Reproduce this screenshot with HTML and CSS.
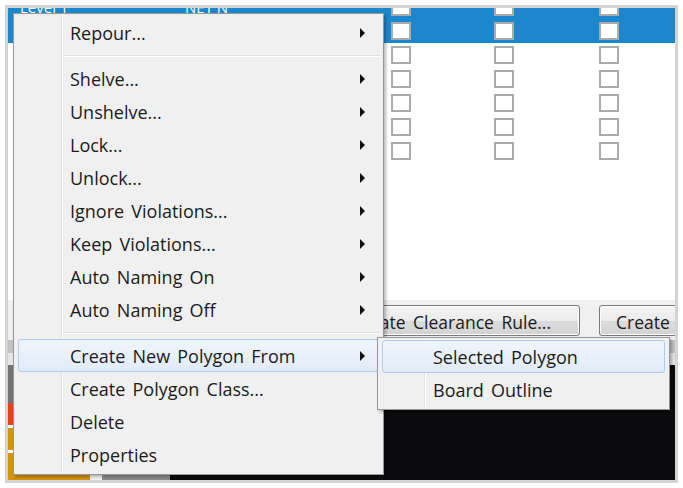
FILE: index.html
```html
<!DOCTYPE html>
<html>
<head>
<meta charset="utf-8">
<link rel="stylesheet" href="styles.css">
</head>
<body>
<div class="screen">
  <div class="frame">
    <div class="grid">
      <div class="row sel"><span class="txt">Level 1</span><span class="txt">NET N</span><span class="chk"></span><span class="chk"></span><span class="chk"></span></div>
      <div class="row sel"><span class="txt"></span><span class="txt"></span><span class="chk"></span><span class="chk"></span><span class="chk"></span></div>
      <div class="row"><span class="txt"></span><span class="txt"></span><span class="chk"></span><span class="chk"></span><span class="chk"></span></div>
      <div class="row"><span class="txt"></span><span class="txt"></span><span class="chk"></span><span class="chk"></span><span class="chk"></span></div>
      <div class="row"><span class="txt"></span><span class="txt"></span><span class="chk"></span><span class="chk"></span><span class="chk"></span></div>
      <div class="row"><span class="txt"></span><span class="txt"></span><span class="chk"></span><span class="chk"></span><span class="chk"></span></div>
      <div class="row"><span class="txt"></span><span class="txt"></span><span class="chk"></span><span class="chk"></span><span class="chk"></span></div>
    </div>
    <div class="btnbar">
      <button class="btn btn-rule">Create Clearance Rule...</button>
      <button class="btn btn-create">Create Net Rule...</button>
    </div>
    <div class="strip-dark"></div>
    <div class="strip-light"></div>
    <div class="bottom">
      <div class="layers">
        <div class="layer l-gray"></div>
        <div class="layer l-red"></div>
        <div class="layer l-gold"></div>
        <div class="layer l-gold last"><span class="sw"></span><span class="gap"></span><span class="rest"></span></div>
      </div>
      <div class="canvas"></div>
    </div>
  </div>

  <div class="menu">
    <div class="item"><span class="label">Repour...</span><span class="arrow"></span></div>
    <div class="sep"></div>
    <div class="item"><span class="label">Shelve...</span><span class="arrow"></span></div>
    <div class="item"><span class="label">Unshelve...</span><span class="arrow"></span></div>
    <div class="item"><span class="label">Lock...</span><span class="arrow"></span></div>
    <div class="item"><span class="label">Unlock...</span><span class="arrow"></span></div>
    <div class="item"><span class="label">Ignore Violations...</span><span class="arrow"></span></div>
    <div class="item"><span class="label">Keep Violations...</span><span class="arrow"></span></div>
    <div class="item"><span class="label">Auto Naming On</span><span class="arrow"></span></div>
    <div class="item"><span class="label">Auto Naming Off</span><span class="arrow"></span></div>
    <div class="sep"></div>
    <div class="item hot"><span class="label">Create New Polygon From</span><span class="arrow"></span></div>
    <div class="item"><span class="label">Create Polygon Class...</span></div>
    <div class="item"><span class="label">Delete</span></div>
    <div class="item"><span class="label">Properties</span></div>
  </div>

  <div class="submenu">
    <div class="item hot"><span class="label">Selected Polygon</span></div>
    <div class="item"><span class="label">Board Outline</span></div>
  </div>
</div>
</body>
</html>
```
FILE: styles.css
```css
html, body {
  margin: 0;
  padding: 0;
  background: #ffffff;
}
body {
  font-family: "Open Sans", "Noto Sans", sans-serif;
  color: #1b1b1b;
}
.screen {
  position: relative;
  width: 683px;
  height: 488px;
  padding: 5px;
  box-sizing: border-box;
}
.frame {
  width: 673px;
  height: 478px;
  box-sizing: border-box;
  border: 3px solid #d4d4d4;
  overflow: hidden;
  display: flex;
  flex-direction: column;
  background: #ffffff;
}
.grid {
  height: 292px;
  flex: none;
  background: #ffffff;
  overflow: hidden;
}
.row {
  height: 24px;
  display: grid;
  grid-template-columns: 175px 208px 103px 105px 1fr;
  align-items: center;
}
.row:first-child {
  margin-top: -13px;
}
.row.sel {
  background: #1c87cd;
  color: #ffffff;
}
.txt {
  font-size: 15px;
  padding-left: 12px;
  line-height: 20px;
  white-space: nowrap;
}
.txt + .txt {
  padding-left: 2px;
}
.chk {
  width: 20px;
  height: 18px;
  box-sizing: border-box;
  border: 2px solid #ababab;
  background: #ffffff;
}
.btnbar {
  height: 40px;
  flex: none;
  background: #f0f0f0;
  display: flex;
  align-items: flex-start;
  padding-top: 5px;
  box-sizing: border-box;
  gap: 19px;
  padding-left: 312px;
}
.btn {
  flex: none;
  height: 31px;
  box-sizing: border-box;
  border: 1px solid #7a7a7a;
  border-radius: 3px;
  background: linear-gradient(#f4f4f4, #ebebeb 50%, #dcdcdc 51%, #d3d3d3);
  box-shadow: inset 0 0 0 1px #fcfcfc;
  font-family: "Open Sans", "Noto Sans", sans-serif;
  font-size: 17.5px;
  word-spacing: 3px;
  color: #1b1b1b;
  white-space: nowrap;
  padding: 3px 0 0;
  line-height: 27px;
}
.btn-rule {
  width: 260px;
  text-align: right;
  padding-right: 28px;
}
.btn-create {
  width: 160px;
  text-align: left;
  padding-left: 16px;
}
.strip-dark {
  height: 13px;
  flex: none;
  background: #c2c2c2;
}
.strip-light {
  height: 12px;
  flex: none;
  background: #e6e6e6;
}
.bottom {
  flex: 1;
  display: flex;
  background: #0b0b0d;
}
.layers {
  width: 162px;
  flex: none;
  display: flex;
  flex-direction: column;
  background: #ffffff;
}
.layer {
  flex: none;
}
.l-gray { height: 38px; background: #747474; }
.l-red { height: 22px; background: #e2431b; margin-bottom: 3px; }
.l-gold { height: 22px; background: #d4940e; margin-bottom: 3px; }
.l-gold.last {
  flex: 1;
  margin-bottom: 0;
  display: flex;
  background: transparent;
}
.sw { width: 82px; background: #d4940e; }
.gap { width: 12px; background: #f4f4f4; }
.rest { flex: 1; background: #8c8c8c; }
.canvas {
  flex: 1;
  background: #0b0b0d;
}

/* context menu */
.menu, .submenu {
  position: absolute;
  box-sizing: border-box;
  background-color: #f0f0f0;
  border: 1px solid #979797;
  box-shadow: 2px 2px 3px rgba(0, 0, 0, 0.28);
  font-size: 18px;
  word-spacing: 2.5px;
}
.menu {
  left: 13px;
  top: 13px;
  width: 371px;
  padding: 2px 0 3px;
  background-image: linear-gradient(to right, transparent 47px, #e2e3e3 47px, #e2e3e3 48px, #ffffff 48px, #ffffff 49px, transparent 49px);
}
.submenu {
  left: 377px;
  top: 337px;
  width: 293px;
  padding: 2px 0 3px;
  background-image: linear-gradient(to right, transparent 46px, #e2e3e3 46px, #e2e3e3 47px, #ffffff 47px, #ffffff 48px, transparent 48px);
}
.item {
  height: 33px;
  box-sizing: border-box;
  display: flex;
  align-items: center;
  border: 1px solid transparent;
  border-radius: 3px;
  margin: 0 3px 0 4px;
  padding-left: 51px;
  white-space: nowrap;
}
.label {
  line-height: 24px;
}
.submenu .item {
  margin: 0 4px;
  padding-left: 50px;
}
.item.hot {
  border-color: #aacdf3;
  background: linear-gradient(#eff5fc, #e1ebf8);
}
.arrow {
  margin-left: auto;
  margin-right: 14px;
  width: 0;
  height: 0;
  border-left: 5px solid #111111;
  border-top: 5px solid transparent;
  border-bottom: 5px solid transparent;
}
.sep {
  height: 13px;
  display: flex;
  align-items: center;
  padding-left: 50px;
  padding-right: 3px;
}
.sep::before {
  content: "";
  flex: 1;
  border-top: 1px solid #e0e0e0;
  border-bottom: 1px solid #ffffff;
  height: 0;
}
```
